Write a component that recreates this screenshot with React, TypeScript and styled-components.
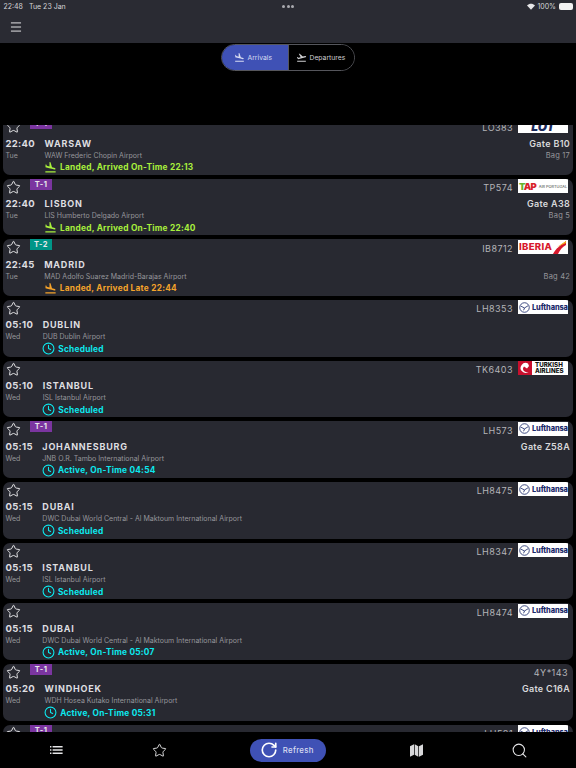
import React from "react";
import styled, { createGlobalStyle } from "styled-components";
import { Menu, Star, Clock, RotateCw, Search } from "lucide-react";

const Global = createGlobalStyle`
  html, body { margin: 0; padding: 0; background: #000; }
  * { box-sizing: border-box; }
`;

const Page = styled.div`
  width: 576px;
  height: 768px;
  display: flex;
  flex-direction: column;
  overflow: hidden;
  background: #000;
  font-family: Inter, "Liberation Sans", sans-serif;
  color: #e6e6e8;
`;

const TopBar = styled.header`
  height: 43px;
  flex: none;
  background: #2a2b33;
  display: flex;
  flex-direction: column;
`;

const StatusBar = styled.div`
  height: 12px;
  display: grid;
  grid-template-columns: 1fr auto 1fr;
  align-items: center;
  padding: 0 3px 0 3.5px;
  font-size: 7px;
  color: #d5d5d8;
`;

const StatusLeft = styled.div`
  display: flex;
  gap: 6px;
`;

const Dots = styled.div`
  display: flex;
  gap: 1.6px;
`;

const Dot = styled.span`
  flex: none;
  width: 3px;
  height: 3px;
  border-radius: 50%;
  background: #aaaab0;
`;

const StatusRight = styled.div`
  display: flex;
  justify-content: flex-end;
  align-items: center;
  gap: 2px;
`;

const Battery = styled.span`
  width: 14px;
  height: 7px;
  border-radius: 2px;
  background: #f2f2f2;
  margin-left: 1px;
`;

const MenuButton = styled.div`
  display: flex;
  padding: 8px 0 0 8.5px;
  color: #f0f0f2;
`;

const TabsArea = styled.div`
  height: 82px;
  flex: none;
  display: flex;
  justify-content: center;
  align-items: flex-start;
  padding-top: 1px;
`;

const Segmented = styled.div`
  display: flex;
  width: 134px;
  height: 27px;
  border: 1px solid #55565c;
  border-radius: 14px;
  overflow: hidden;
`;

const Segment = styled.div<{ $active?: boolean }>`
  flex: 0 0 50%;
  display: flex;
  align-items: center;
  padding-left: ${(p) => (p.$active ? 11.5 : 6.5)}px;
  gap: 3px;
  font-size: 6.8px;
  background: ${(p) => (p.$active ? "#3f51b5" : "#000")};
  color: ${(p) => (p.$active ? "#d8dcf2" : "#cfcfd2")};
  & + & { border-left: 1px solid #55565c; }
`;

const ListArea = styled.main`
  flex: 1;
  min-height: 0;
  overflow: hidden;
`;

const Scroller = styled.div`
  margin-top: -7px;
  padding: 0 3px 0 2.5px;
  display: flex;
  flex-direction: column;
  gap: 4px;
`;

const Card = styled.article`
  height: 56.67px;
  flex: none;
  background: #282931;
  border-radius: 7px;
  display: flex;
  flex-direction: column;
  overflow: hidden;
`;

const TopRow = styled.div`
  height: 19px;
  flex: none;
  display: flex;
  align-items: flex-start;
`;

const StarSlot = styled.div`
  width: 27.5px;
  padding: 1px 0 0 3.7px;
  color: #eeeef0;
  display: flex;
`;

const Terminal = styled.span<{ $color: string }>`
  width: 22px;
  height: 11px;
  background: ${(p) => p.$color};
  color: #e8e8ea;
  font-size: 7.5px;
  font-weight: 700;
  letter-spacing: 0.4px;
  display: flex;
  align-items: center;
  justify-content: center;
`;

const Flight = styled.span`
  margin-left: auto;
  padding: 3.5px 5px 0 0;
  font-size: 9px;
  letter-spacing: 0.45px;
  color: #b4b4b8;
`;

const LogoBox = styled.div`
  width: 50px;
  height: 14px;
  margin: 0.5px 5px 0 0;
  background: #fff;
  display: flex;
  align-items: center;
  overflow: hidden;
  flex: none;
`;

const Details = styled.div`
  display: grid;
  grid-template-columns: auto 1fr auto;
  grid-template-rows: repeat(3, 12px);
  column-gap: 9.5px;
  padding: 0 3px;
  align-items: center;
`;

const Time = styled.span`
  font-size: 9.5px;
  font-weight: 700;
  letter-spacing: 0.3px;
  color: #dedee0;
`;

const City = styled.span`
  font-size: 9px;
  font-weight: 700;
  letter-spacing: 0.8px;
  color: #dedee0;
`;

const Gate = styled.span`
  font-size: 9px;
  font-weight: 600;
  letter-spacing: 0.3px;
  color: #d8d8da;
  text-align: right;
`;

const Day = styled.span`
  font-size: 7px;
  color: #96969b;
`;

const Airport = styled.span`
  font-size: 7px;
  color: #96969b;
`;

const Bag = styled.span`
  font-size: 7.5px;
  letter-spacing: 0.2px;
  color: #96969b;
  text-align: right;
`;

const StatusRow = styled.div<{ $color: string }>`
  grid-column: 2 / -1;
  grid-row: 3;
  margin-left: -0.6px;
  display: flex;
  align-items: center;
  gap: 3.2px;
  color: ${(p) => p.$color};
  font-size: 8.3px;
  font-weight: 700;
  letter-spacing: 0.25px;
  line-height: 12px;
`;

const BottomNav = styled.nav`
  height: 36px;
  flex: none;
  display: grid;
  grid-template-columns: 103.5px 103.5px 153.5px 103.5px 103.5px;
  padding: 0 4px;
  align-items: center;
  justify-items: center;
  color: #e6e6e8;
`;

const RefreshButton = styled.button`
  width: 76px;
  height: 23px;
  border: 0;
  border-radius: 12px;
  background: #3f51b5;
  color: #d8dcf2;
  font: 500 7.8px Inter, sans-serif;
  letter-spacing: 0.3px;
  display: flex;
  align-items: center;
  gap: 5px;
  padding: 0 0 0 10px;
`;

const RefreshIcon = styled.span`
  display: flex;
  color: #fff;
`;

const Lufthansa = styled.span`
  color: #1c2a6b;
  font-size: 7.4px;
  font-weight: 800;
  letter-spacing: -0.1px;
  margin-left: 2px;
`;

const TapMark = styled.span`
  font-size: 9.5px;
  font-weight: 900;
  letter-spacing: -0.9px;
  color: #d8232a;
  margin-left: 1px;
`;

const TapGreen = styled.span`
  color: #66b32e;
`;

const TapText = styled.span`
  font-size: 3.9px;
  color: #444;
  margin-left: 3px;
  white-space: nowrap;
`;

const IberiaText = styled.span`
  color: #d7192d;
  font-size: 9.6px;
  font-weight: 800;
  margin-left: 1px;
  letter-spacing: 0.3px;
`;

const TurkishText = styled.span`
  color: #111;
  font-size: 6.2px;
  font-weight: 800;
  line-height: 6.4px;
  margin-left: 3px;
`;

const LotText = styled.span`
  color: #1b2a5c;
  font-size: 12px;
  font-weight: 900;
  font-style: italic;
  margin: auto;
`;

const Crane = () => (
  <svg width="11" height="11" viewBox="0 0 12 12" fill="none" stroke="#1c2a6b" style={{ marginLeft: 1, flex: "none" }}>
    <circle cx="6" cy="6" r="5.2" strokeWidth="0.9" />
    <path d="M2 4.5 L6 6.5 L10 4 M6 6.5 L5 9" strokeWidth="0.9" />
  </svg>
);

const Logo = ({ kind }: { kind: string }) => {
  if (kind === "lh")
    return (
      <LogoBox>
        <Crane />
        <Lufthansa>Lufthansa</Lufthansa>
      </LogoBox>
    );
  if (kind === "tap")
    return (
      <LogoBox>
        <TapMark>
          <TapGreen>T</TapGreen>AP
        </TapMark>
        <TapText>AIR PORTUGAL</TapText>
      </LogoBox>
    );
  if (kind === "ib")
    return (
      <LogoBox>
        <IberiaText>IBERIA</IberiaText>
        <svg width="14" height="14" viewBox="0 0 14 14" style={{ flex: "none" }}>
          <path d="M1 14 C4 8 8 6 14 1 L14 5 C10 7 8 10 6 14 Z" fill="#d7192d" />
          <path d="M5 7 C8 5 11 3 14 1 L14 3 C11 4 8 6 5 7 Z" fill="#f6b11a" />
        </svg>
      </LogoBox>
    );
  if (kind === "tk")
    return (
      <LogoBox>
        <svg width="14" height="14" viewBox="0 0 14 14" style={{ flex: "none" }}>
          <rect width="14" height="14" fill="#c8102e" />
          <path d="M10 2.5 A5 5 0 1 0 10.5 11 C6 12 3.5 8 6 5.5 L9 7.5 L11 5 Z" fill="#fff" />
        </svg>
        <TurkishText>
          TURKISH
          <br />
          AIRLINES
        </TurkishText>
      </LogoBox>
    );
  return (
    <LogoBox>
      <LotText>LOT</LotText>
    </LogoBox>
  );
};

type Flt = {
  time: string; day: string; city: string; airport: string; code: string; logo: string;
  term?: string; gate?: string; bag?: string; status: string; tone: "green" | "orange" | "cyan";
};

const flights: Flt[] = [
  { time: "22:40", day: "Tue", city: "WARSAW", airport: "WAW Frederic Chopin Airport", code: "LO383", logo: "lot", term: "T-1", gate: "Gate B10", bag: "Bag 17", status: "Landed, Arrived On-Time 22:13", tone: "green" },
  { time: "22:40", day: "Tue", city: "LISBON", airport: "LIS Humberto Delgado Airport", code: "TP574", logo: "tap", term: "T-1", gate: "Gate A38", bag: "Bag 5", status: "Landed, Arrived On-Time 22:40", tone: "green" },
  { time: "22:45", day: "Tue", city: "MADRID", airport: "MAD Adolfo Suarez Madrid-Barajas Airport", code: "IB8712", logo: "ib", term: "T-2", bag: "Bag 42", status: "Landed, Arrived Late 22:44", tone: "orange" },
  { time: "05:10", day: "Wed", city: "DUBLIN", airport: "DUB Dublin Airport", code: "LH8353", logo: "lh", status: "Scheduled", tone: "cyan" },
  { time: "05:10", day: "Wed", city: "ISTANBUL", airport: "ISL Istanbul Airport", code: "TK6403", logo: "tk", status: "Scheduled", tone: "cyan" },
  { time: "05:15", day: "Wed", city: "JOHANNESBURG", airport: "JNB O.R. Tambo International Airport", code: "LH573", logo: "lh", term: "T-1", gate: "Gate Z58A", status: "Active, On-Time 04:54", tone: "cyan" },
  { time: "05:15", day: "Wed", city: "DUBAI", airport: "DWC Dubai World Central - Al Maktoum International Airport", code: "LH8475", logo: "lh", status: "Scheduled", tone: "cyan" },
  { time: "05:15", day: "Wed", city: "ISTANBUL", airport: "ISL Istanbul Airport", code: "LH8347", logo: "lh", status: "Scheduled", tone: "cyan" },
  { time: "05:15", day: "Wed", city: "DUBAI", airport: "DWC Dubai World Central - Al Maktoum International Airport", code: "LH8474", logo: "lh", status: "Active, On-Time 05:07", tone: "cyan" },
  { time: "05:20", day: "Wed", city: "WINDHOEK", airport: "WDH Hosea Kutako International Airport", code: "4Y*143", logo: "", term: "T-1", gate: "Gate C16A", status: "Active, On-Time 05:31", tone: "cyan" },
  { time: "05:20", day: "Wed", city: "CAIRO", airport: "CAI Cairo International Airport", code: "LH581", logo: "lh", term: "T-1", status: "Scheduled", tone: "cyan" },
];

const toneColor = { green: "#a8f03c", orange: "#f5a32a", cyan: "#0ce8ee" };
const termColor: Record<string, string> = { "T-1": "#7b35a0", "T-2": "#009688" };

const FlightLand = ({ size }: { size: number }) => (
  <svg width={size} height={size} viewBox="0 0 24 24" fill="currentColor" style={{ flex: "none" }}>
    <path d="M2.5 19h19v2h-19v-2zm7.18-5.73l4.35 1.16 5.31 1.42c.8.21 1.62-.26 1.84-1.06.21-.8-.26-1.62-1.06-1.84l-5.31-1.42-2.76-9.02L10.12 2v8.28L5.15 8.95l-.93-2.32-1.45-.39v5.17l1.6.43 5.31 1.43z" />
  </svg>
);

const FlightTakeoff = ({ size }: { size: number }) => (
  <svg width={size} height={size} viewBox="0 0 24 24" fill="currentColor" style={{ flex: "none" }}>
    <path d="M2.5 19h19v2h-19v-2zm19.57-9.36c-.21-.8-1.04-1.28-1.84-1.06L14.92 10l-6.9-6.43-1.93.51 4.14 7.17-4.97 1.33-1.97-1.54-1.45.39 2.59 4.49L21 11.49c.81-.23 1.28-1.05 1.07-1.85z" />
  </svg>
);

const ListIcon = () => (
  <svg width="14" height="14" viewBox="0 0 14 14" fill="#e6e6e8">
    <path d="M1 3h1.4v1.6H1zM3.6 3H13.6v1.6H3.6zM1 6.2h1.4v1.6H1zM3.6 6.2H13.6v1.6H3.6zM1 9.4h1.4V11H1zM3.6 9.4H13.6V11H3.6z" />
  </svg>
);

const MapIcon = () => (
  <svg width="15" height="15" viewBox="0 0 15 15" fill="#d8d8da">
    <path d="M1 3.2 L5 1.2 V11.8 L1 13.8 Z M5.7 1.2 L9.3 3.2 V13.8 L5.7 11.8 Z M10 3.2 L14 1.2 V11.8 L10 13.8 Z" />
  </svg>
);

const WifiIcon = () => (
  <svg width="8" height="7" viewBox="0 0 10 8" fill="#e6e6e8">
    <path d="M5 8 L0 2.6 C3 -0.2 7 -0.2 10 2.6 Z" />
  </svg>
);

const FlightCard = ({ f }: { f: Flt }) => (
  <Card>
    <TopRow>
      <StarSlot>
        <Star size={15} strokeWidth={1.5} />
      </StarSlot>
      {f.term && <Terminal $color={termColor[f.term]}>{f.term}</Terminal>}
      <Flight>{f.code}</Flight>
      {f.logo && <Logo kind={f.logo} />}
    </TopRow>
    <Details>
      <Time>{f.time}</Time>
      <City>{f.city}</City>
      <Gate>{f.gate}</Gate>
      <Day>{f.day}</Day>
      <Airport>{f.airport}</Airport>
      <Bag>{f.bag}</Bag>
      <StatusRow $color={toneColor[f.tone]}>
        {f.tone === "cyan" ? <Clock size={13} strokeWidth={2} /> : <FlightLand size={13} />}
        {f.status}
      </StatusRow>
    </Details>
  </Card>
);

export default function App() {
  return (
    <Page>
      <Global />
      <TopBar>
        <StatusBar>
          <StatusLeft>
            <span>22:48</span>
            <span>Tue 23 Jan</span>
          </StatusLeft>
          <Dots>
            <Dot />
            <Dot />
            <Dot />
          </Dots>
          <StatusRight>
            <WifiIcon />
            <span>100%</span>
            <Battery />
          </StatusRight>
        </StatusBar>
        <MenuButton>
          <Menu size={14} strokeWidth={1.6} />
        </MenuButton>
      </TopBar>
      <TabsArea>
        <Segmented>
          <Segment $active>
            <FlightLand size={11} />
            Arrivals
          </Segment>
          <Segment>
            <FlightTakeoff size={11} />
            Departures
          </Segment>
        </Segmented>
      </TabsArea>
      <ListArea>
        <Scroller>
          {flights.map((f, i) => (
            <FlightCard key={i} f={f} />
          ))}
        </Scroller>
      </ListArea>
      <BottomNav>
        <ListIcon />
        <Star size={15} strokeWidth={1.5} />
        <RefreshButton>
          <RefreshIcon>
            <RotateCw size={18} strokeWidth={2.2} />
          </RefreshIcon>
          Refresh
        </RefreshButton>
        <MapIcon />
        <Search size={17} strokeWidth={1.5} />
      </BottomNav>
    </Page>
  );
}
